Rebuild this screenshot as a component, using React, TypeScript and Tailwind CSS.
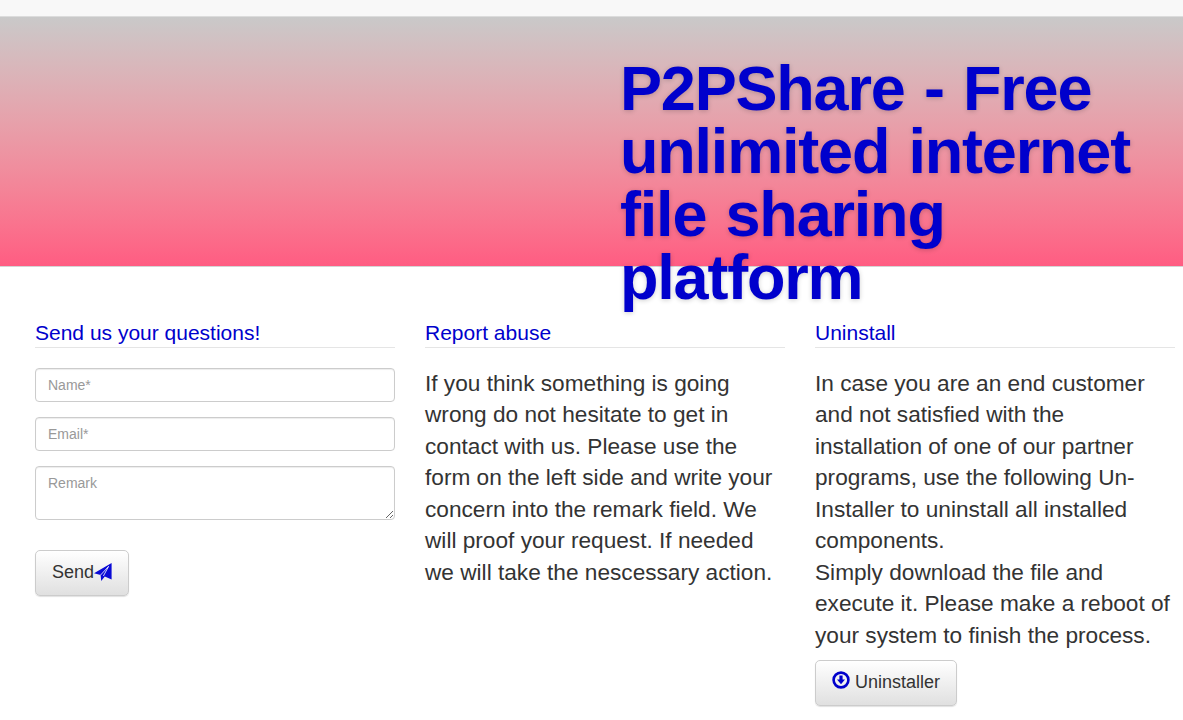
import React from "react";

function Plane() {
  return (
    <svg width="18" height="18" viewBox="0 0 18 18" className="shrink-0 -mt-[2px]">
      <path d="M17.6 0 L17.6 16.6 L10.8 13.6 L7.2 18 L6.6 12 L0 10.2 Z" fill="#0a0ad6" />
      <path d="M6.6 12 L14.6 3.4 L9.4 13" fill="none" stroke="#fff" strokeWidth="0.8" />
    </svg>
  );
}

function DownCircle() {
  return (
    <svg width="18" height="18" viewBox="0 0 18 18" className="shrink-0 -mt-[5px]">
      <circle cx="9" cy="9" r="7.4" fill="none" stroke="#0000cc" strokeWidth="2.6" />
      <path d="M7.4 4.6 H10.6 V8.6 H13 L9 13.2 L5 8.6 H7.4 Z" fill="#0000cc" />
    </svg>
  );
}

const btn =
  "flex items-center rounded-[5px] border border-[#ccc] bg-gradient-to-b from-white to-[#e0e0e0] shadow-[0_1px_1px_rgba(0,0,0,0.12)] text-[#333]";
const field =
  "block w-full rounded-[4px] border border-[#ccc] bg-white px-3 text-[14px] text-[#555] outline-none placeholder:text-[#999] shadow-[inset_0_1px_1px_rgba(0,0,0,0.075)]";
const heading =
  "text-[21px] leading-[22px] font-normal text-[#0000cc] border-b border-[#e5e5e5] pb-[3px] h-[26px]";

export default function App() {
  return (
    <div className="min-h-[720px] bg-white overflow-hidden font-['Liberation_Sans',Arial,sans-serif] text-[22.65px] leading-[31.43px] text-[#333]">
      <div className="h-[17px] bg-[#f8f8f8] border-b border-[#dcdcdc]" />
      <header className="h-[250px] border-b border-[#d4d4d4] bg-gradient-to-b from-[#c9c9c9] to-[#ff5c82] pl-[620px] pt-[40px]">
        <h1 className="w-[530px] m-0 text-[63px] leading-[63px] font-bold tracking-[-1.2px] [word-spacing:3px] text-[#0000cc] [text-shadow:0_1px_5px_rgba(0,0,0,0.2)]">
          P2PShare - Free unlimited internet file sharing platform
        </h1>
      </header>
      <main className="flex gap-[30px] pl-[35px] pr-[8px] pt-[55px]">
        <section className="w-[360px]">
          <h2 className={heading}>Send us your questions!</h2>
          <form className="mt-[20px] flex flex-col">
            <input className={`${field} h-[34px]`} placeholder="Name*" />
            <input className={`${field} h-[34px] mt-[15px]`} placeholder="Email*" />
            <textarea className={`${field} h-[54px] mt-[15px] py-[6px] leading-[20px]`} placeholder="Remark" />
            <button type="button" className={`${btn} mt-[30px] h-[46px] w-[94px] px-4 text-[18px]`}>
              Send
              <Plane />
            </button>
          </form>
        </section>
        <section className="w-[360px]">
          <h2 className={heading}>Report abuse</h2>
          <p className="mt-[20px]">
            If you think something is going wrong do not hesitate to get in contact with us. Please use the form on the left side and write your concern into the remark field. We will proof your request. If needed we will take the nescessary action.
          </p>
        </section>
        <section className="w-[360px]">
          <h2 className={heading}>Uninstall</h2>
          <p className="mt-[20px]">
            In case you are an end customer and not satisfied with the installation of one of our partner programs, use the following Un-Installer to uninstall all installed components.
            <br />
            Simply download the file and execute it. Please make a reboot of your system to finish the process.
          </p>
          <button type="button" className={`${btn} mt-[9px] h-[46px] w-[142px] px-4 gap-[5px] text-[18px]`}>
            <DownCircle />
            Uninstaller
          </button>
        </section>
      </main>
    </div>
  );
}
